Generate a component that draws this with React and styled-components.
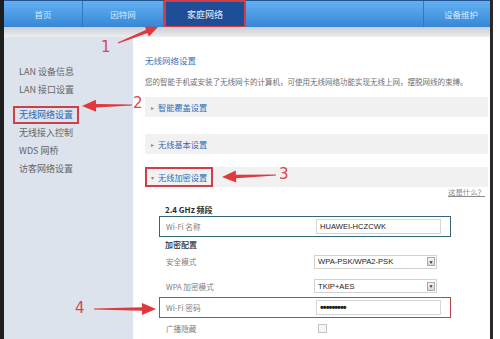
import React from 'react';
import styled, { createGlobalStyle } from 'styled-components';

const GlobalStyle = createGlobalStyle`
  html, body {
    margin: 0;
    padding: 0;
    width: 500px;
    height: 339px;
    overflow: hidden;
    background: #fff;
    font-family: "Noto Sans CJK SC", "Noto Sans", sans-serif;
  }
`;

const RED = '#cf3f48';

const Page = styled.div`
  position: relative;
  width: 500px;
  height: 339px;
  display: flex;
`;

const Frame = styled.div`
  width: 486px;
  height: 339px;
  border-left: 4px solid #1e1e1e;
  border-right: 3px solid #2a2a2a;
  display: flex;
  flex-direction: column;
`;

const Nav = styled.div`
  height: 27px;
  flex: none;
  display: flex;
  box-sizing: border-box;
  border-top: 1px solid #23528e;
  background: linear-gradient(#63b0f2, #4a9ae4 55%, #3786d5);
`;

const Tab = styled.div`
  width: ${p => p.w}px;
  flex: none;
  box-sizing: border-box;
  display: flex;
  align-items: center;
  justify-content: center;
  padding-left: ${p => p.pad || 0}px;
  font-size: 8.5px;
  color: #d6e8f9;
  border-left: ${p => (p.sepLeft ? '1px solid #3478c0' : 'none')};
  border-right: ${p => (p.sepRight ? '1px solid #3478c0' : 'none')};
`;

const ActiveTab = styled(Tab)`
  background: #1e4e97;
  color: #eef3fa;
  font-size: 9px;
  border: 2px solid ${RED};
  margin-top: -1px;
  height: 28px;
`;

const Spacer = styled.div`
  flex: 1;
`;

const Strip = styled.div`
  height: 10px;
  flex: none;
  background: linear-gradient(#c9cdd2, #eceef0);
`;

const Body = styled.div`
  flex: 1;
  display: flex;
  min-height: 0;
`;

const Side = styled.div`
  width: 129px;
  flex: none;
  box-sizing: border-box;
  background: #dce3ec;
  padding: 26px 0 0 9px;
`;

const SideItem = styled.div`
  height: 18px;
  line-height: 18px;
  font-size: 9px;
  color: ${p => (p.active ? '#2a68b5' : '#666')};
  box-sizing: border-box;
  padding-left: 6px;
  ${p => p.active && `
    display: inline-block;
    padding: 0 4px;
    line-height: 14px;
    border: 2px solid ${RED};
  `}
`;

const Main = styled.div`
  flex: 1;
  background: #fff;
  padding: 17px 2px 0 12px;
  display: flex;
  flex-direction: column;
`;

const Title = styled.div`
  font-size: 8.5px;
  line-height: 12px;
  color: #3a74bd;
`;

const Desc = styled.div`
  margin-top: 10px;
  font-size: 7.5px;
  line-height: 12px;
  color: #707070;
  white-space: nowrap;
`;

const Bar = styled.div`
  margin-top: ${p => p.mt}px;
  height: 20px;
  flex: none;
  background: #f1f1f1;
  display: flex;
  align-items: stretch;
`;

const BarLabel = styled.div`
  display: flex;
  align-items: center;
  gap: 4px;
  padding-left: 6px;
  padding-right: ${p => (p.boxed ? 4 : 0)}px;
  font-size: 8.2px;
  color: #2f6db5;
  box-sizing: border-box;
  ${p => p.boxed && `border: 2px solid ${RED}; padding-left: 4px;`}
`;

const Caret = styled.span`
  font-size: 6px;
  color: #8a8a8a;
`;

const Help = styled.div`
  height: 10px;
  line-height: 10px;
  text-align: right;
  padding-right: 3px;
  font-size: 7.4px;
  color: #8a8a8a;
  text-decoration: underline;
`;

const Heading = styled.div`
  margin: ${p => p.mt || 0}px 0 0 20px;
  height: ${p => p.h}px;
  line-height: ${p => p.h}px;
  font-size: 8px;
  font-weight: ${p => (p.bold ? 700 : 500)};
  color: #2a2a2a;
`;

const Row = styled.div`
  margin: ${p => p.mt || 0}px 0 0 14px;
  width: 292px;
  height: ${p => p.h || 22}px;
  box-sizing: border-box;
  display: flex;
  align-items: center;
  padding-left: 6px;
  border: 1.5px solid ${p => p.frame || 'transparent'};
`;

const Label = styled.div`
  width: 150px;
  flex: none;
  font-size: 7.6px;
  color: #808080;
`;

const Input = styled.div`
  width: 125px;
  height: 15px;
  box-sizing: border-box;
  border: 1px solid #d6d6d6;
  padding-left: 3px;
  display: flex;
  align-items: center;
  font-family: "Liberation Sans", Arial, sans-serif;
  font-size: 7.6px;
  color: #222;
`;

const Dots = styled.span`
  font-size: 11px;
  font-weight: 700;
  letter-spacing: -1px;
`;

const Select = styled.div`
  width: 123px;
  height: 14px;
  margin-left: -2px;
  box-sizing: border-box;
  border: 1px solid #d2d2d2;
  display: flex;
  align-items: center;
  justify-content: space-between;
  padding: 0 1px 0 3px;
  font-family: "Liberation Sans", Arial, sans-serif;
  font-size: 7.6px;
  color: #222;
`;

const DropBtn = styled.span`
  width: 8px;
  height: 9px;
  box-sizing: border-box;
  border: 1px solid #aaa;
  background: linear-gradient(#f4f4f4, #d8d8d8);
  display: flex;
  align-items: center;
  justify-content: center;
  font-size: 5px;
  color: #333;
`;

const Check = styled.span`
  width: 7px;
  height: 7px;
  margin-left: 2px;
  border: 1px solid #c4c4c4;
  background: #f6f6f6;
`;

const Overlay = styled.svg`
  position: absolute;
  left: 0;
  top: 0;
  pointer-events: none;
`;

const Num = styled.span`
  position: absolute;
  left: ${p => p.x}px;
  top: ${p => p.y}px;
  font-family: "DejaVu Sans", sans-serif;
  font-size: 15px;
  line-height: 15px;
  color: #d9484c;
`;

// tapered arrow from tail to tip
const arrow = (x1, y1, x2, y2, head = 12, half = 5.5) => {
  const L = Math.hypot(x2 - x1, y2 - y1);
  const ux = (x2 - x1) / L;
  const uy = (y2 - y1) / L;
  const nx = -uy;
  const ny = ux;
  const bx = x2 - ux * head;
  const by = y2 - uy * head;
  const pts = [
    [x1 + nx * 0.6, y1 + ny * 0.6],
    [bx + nx * 1.8, by + ny * 1.8],
    [bx + nx * half, by + ny * half],
    [x2, y2],
    [bx - nx * half, by - ny * half],
    [bx - nx * 1.8, by - ny * 1.8],
    [x1 - nx * 0.6, y1 - ny * 0.6]
  ];
  return pts.map(p => p.map(v => v.toFixed(1)).join(',')).join(' ');
};

const sideItems = ['LAN 设备信息', 'LAN 接口设置', '无线网络设置', '无线接入控制', 'WDS 网桥', '访客网络设置'];

const App = () => {
  return (
    <Page>
      <GlobalStyle />
      <Frame>
        <Nav>
          <Tab w={79} sepRight>首页</Tab>
          <Tab w={81} sepRight>因特网</Tab>
          <ActiveTab w={82}>家庭网络</ActiveTab>
          <Spacer />
          <Tab w={67} sepLeft pad={8}>设备维护</Tab>
        </Nav>
        <Strip />
        <Body>
          <Side>
            {sideItems.map(item => (
              <div key={item}>
                <SideItem active={item === '无线网络设置'}>{item}</SideItem>
              </div>
            ))}
          </Side>
          <Main>
            <Title>无线网络设置</Title>
            <Desc>您的智能手机或安装了无线网卡的计算机，可使用无线网络功能实现无线上网，摆脱网线的束缚。</Desc>
            <Bar mt={9}>
              <BarLabel><Caret>▸</Caret>智能覆盖设置</BarLabel>
            </Bar>
            <Bar mt={17}>
              <BarLabel><Caret>▸</Caret>无线基本设置</BarLabel>
            </Bar>
            <Bar mt={13}>
              <BarLabel boxed><Caret>▾</Caret>无线加密设置</BarLabel>
            </Bar>
            <Help>这是什么？</Help>
            <Heading mt={7} h={12} bold>2.4 GHz 频段</Heading>
            <Row frame="#35647e">
              <Label>Wi-Fi 名称</Label>
              <Input>HUAWEI-HCZCWK</Input>
            </Row>
            <Heading h={16}>加密配置</Heading>
            <Row h={18}>
              <Label>安全模式</Label>
              <Select>WPA-PSK/WPA2-PSK<DropBtn>▼</DropBtn></Select>
            </Row>
            <Row h={20} mt={6}>
              <Label>WPA 加密模式</Label>
              <Select>TKIP+AES<DropBtn>▼</DropBtn></Select>
            </Row>
            <Row mt={1} frame="#b8444c">
              <Label>Wi-Fi 密码</Label>
              <Input><Dots>•••••••••</Dots></Input>
            </Row>
            <Row>
              <Label>广播隐藏</Label>
              <Check />
            </Row>
          </Main>
        </Body>
      </Frame>

      <Overlay width="500" height="339" viewBox="0 0 500 339">
        <polygon points={arrow(118, 43, 158, 27, 12, 5.5)} fill="#e0393d" />
        <polygon points={arrow(132, 105, 82, 106, 14, 6)} fill="#e0393d" />
        <polygon points={arrow(276, 175, 222, 177, 14, 6)} fill="#e0393d" />
        <polygon points={arrow(94, 309, 156, 309, 14, 6)} fill="#e0393d" />
      </Overlay>
      <Num x={101} y={40}>1</Num>
      <Num x={133} y={96}>2</Num>
      <Num x={279} y={167}>3</Num>
      <Num x={75} y={301}>4</Num>
    </Page>
  );
};

export default App;
